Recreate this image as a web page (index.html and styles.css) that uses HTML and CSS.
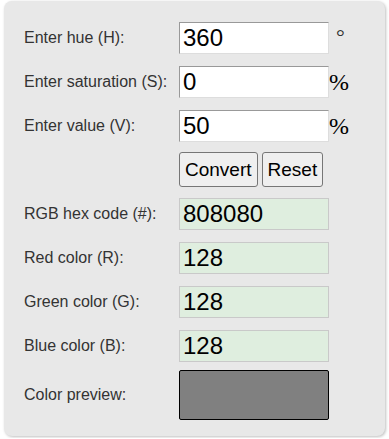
FILE: index.html
```html
<!DOCTYPE html>
<html lang="en">
<head>
    <meta charset="UTF-8">
    <meta name="viewport" content="width=device-width, initial-scale=1.0">
    <title>HSV to RGB Converter</title>
    <link rel="stylesheet" href="styles.css">
</head>
<body>
    <div class="panel">
        <form class="calc">
            <label for="hue">Enter hue (H):</label>
            <div class="field"><input type="text" id="hue" value="360"><span class="deg">°</span></div>

            <label for="sat">Enter saturation (S):</label>
            <div class="field"><input type="text" id="sat" value="0"><span class="unit">%</span></div>

            <label for="val">Enter value (V):</label>
            <div class="field"><input type="text" id="val" value="50"><span class="unit">%</span></div>

            <div></div>
            <div class="buttons">
                <button type="button">Convert</button>
                <button type="reset">Reset</button>
            </div>

            <label for="hex">RGB hex code (#):</label>
            <div class="field"><input type="text" id="hex" class="out" value="808080" readonly></div>

            <label for="red">Red color (R):</label>
            <div class="field"><input type="text" id="red" class="out" value="128" readonly></div>

            <label for="green">Green color (G):</label>
            <div class="field"><input type="text" id="green" class="out" value="128" readonly></div>

            <label for="blue">Blue color (B):</label>
            <div class="field"><input type="text" id="blue" class="out" value="128" readonly></div>

            <label class="preview-label">Color preview:</label>
            <div class="field preview-row"><div class="preview"></div></div>
        </form>
    </div>
</body>
</html>
```

FILE: styles.css
```css
* { box-sizing: border-box; }
body { margin: 0; font-family: "Liberation Sans", Arial, sans-serif; color: #333; background: #fff; }
.panel { margin: 1px 4px 2px; height: 435px; background: #e8e8e8; border-radius: 8px; box-shadow: 1px 1px 3px rgba(0, 0, 0, 0.25); padding: 21px 0 0 20px; }
.calc { display: grid; grid-template-columns: 155px 1fr; row-gap: 12px; align-items: center; }
label { font-size: 16px; }
.field { display: flex; align-items: baseline; height: 32px; }
input[type="text"] { width: 150px; height: 32px; padding: 1px 3px; font-family: "Liberation Sans", Arial, sans-serif; font-size: 24px; color: #000; background: #fff; border: 1px solid; border-color: #999 #ddd #ddd #999; outline: none; }
input.out { background: #dfeedf; border: 1px solid #c9c9c9; }
.unit { font-family: "Liberation Serif", "Times New Roman", serif; font-size: 24px; color: #000; }
.deg { font-family: "Liberation Serif", "Times New Roman", serif; font-size: 22px; color: #333; align-self: flex-start; line-height: 1; margin: 4px 0 0 7px; }
.buttons { display: flex; gap: 4px; margin: -2px 0 -1px; }
button { height: 35px; padding: 0 5px; font-family: "Liberation Sans", Arial, sans-serif; font-size: 19px; color: #000; background: #efefef; border: 1px solid #767676; border-radius: 3px; }
.preview-label { margin-top: -4px; }
.preview-row { height: 50px; margin-top: -4px; }
.preview { width: 150px; height: 50px; background: #808080; border: 1px solid #000; border-radius: 2px; }
```
